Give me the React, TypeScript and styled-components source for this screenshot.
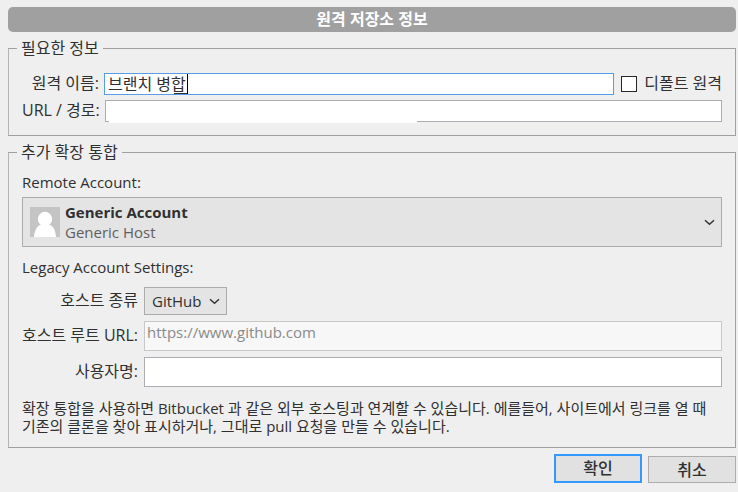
import React from "react";
import styled, { createGlobalStyle, css } from "styled-components";

const GlobalStyle = createGlobalStyle`
  *, *::before, *::after { box-sizing: border-box; }
  body {
    margin: 0;
    background: #efefef;
    color: #303030;
    font-family: "Open Sans", "Noto Sans CJK KR", sans-serif;
    font-size: 15px;
    line-height: 20px;
  }
  button, input, select { font: inherit; color: inherit; margin: 0; border-radius: 0; outline: none; }
`;

const hangul = css`
  font-family: "Open Sans", "Noto Sans CJK KR", sans-serif;
  font-size: 16px;
`;

const Dialog = styled.form`
  display: flex;
  flex-direction: column;
  padding: 7px 2px 8px 8px;
`;

const Title = styled.h1`
  ${hangul}
  margin: 0 0 6px;
  border-radius: 5px;
  background: #a0a0a0;
  color: #fff;
  font-weight: 700;
  line-height: 25px;
  text-align: center;
`;

const Group = styled.fieldset<{ $pad: string }>`
  min-width: 0;
  margin: 0 0 6px;
  padding: ${(p) => p.$pad};
  border: 1px solid #a0a0a0;
  border-left-color: #b4b4b4;
`;

const Legend = styled.legend`
  ${hangul}
  margin-left: -5px;
  padding: 0 4px;
  line-height: 20px;
`;

const Rows = styled.div<{ $gap: number }>`
  display: flex;
  flex-direction: column;
  gap: ${(p) => p.$gap}px;
`;

const Row = styled.div<{ $gap: number }>`
  display: flex;
  align-items: center;
  gap: ${(p) => p.$gap}px;
`;

const RowLabel = styled.label<{ $width: number }>`
  ${hangul}
  flex: 0 0 ${(p) => p.$width}px;
  padding-bottom: 2px;
  line-height: 18px;
  text-align: right;
  white-space: nowrap;
`;

const Field = styled.div`
  position: relative;
  flex: 1;
  min-width: 0;
  display: flex;
`;

const TextInput = styled.input<{ $height: number }>`
  flex: 1;
  width: 100%;
  min-width: 0;
  height: ${(p) => p.$height}px;
  padding: 0 3px;
  border: 1px solid #abadb3;
  background: #fff;

  &:disabled {
    padding: 0 2px 8px;
    border-color: #c8c8c8;
    background: #f7f7f7;
    color: #8a8a8a;
  }
`;

const NameInput = styled(TextInput)`
  ${hangul}
  padding-bottom: 2px;
  border-color: #569de5;
`;

const Composition = styled.span`
  position: absolute;
  top: 1px;
  bottom: 1px;
  left: 70px;
  width: 14px;
  border-right: 1px solid #000;
  pointer-events: none;

  &::before {
    content: "";
    position: absolute;
    left: 0;
    right: 0;
    bottom: 0;
    height: 1px;
    background: #303030;
  }
`;

const Mask = styled.span`
  position: absolute;
  top: 1px;
  bottom: -1px;
  left: 4px;
  width: 50%;
  background: #fff;
`;

const CheckLabel = styled.label`
  ${hangul}
  display: flex;
  align-items: center;
  gap: 7px;
  margin-left: 2px;
  white-space: nowrap;
`;

const CheckText = styled.span`
  padding-bottom: 2px;
  line-height: 18px;
`;

const Checkbox = styled.input`
  appearance: none;
  width: 16px;
  height: 16px;
  border: 1px solid #262626;
  background: #fff;

  &:checked { background: #262626; }
`;

const SectionLabel = styled.div`
  padding-bottom: 2px;
  line-height: 18px;
`;

const AccountButton = styled.button`
  display: flex;
  align-items: center;
  width: 100%;
  height: 50px;
  margin: 4px 0 11px;
  padding: 0 6px 0 7px;
  border: 1px solid #acacac;
  background: #e4e4e4;
  text-align: left;
`;

const AccountText = styled.span`
  flex: 1;
  display: flex;
  flex-direction: column;
  margin-left: 5px;
`;

const AccountName = styled.strong`
  font-weight: 700;
`;

const AccountHost = styled.span`
  color: #606060;
`;

const SelectWrap = styled.div`
  display: flex;
  align-items: center;
  position: relative;
`;

const Select = styled.select`
  appearance: none;
  height: 28px;
  padding: 0 24px 0 7px;
  border: 1px solid #acacac;
  background: #e4e4e4;
`;

const SelectArrow = styled.span`
  position: absolute;
  right: 7px;
  display: flex;
  pointer-events: none;
`;

const Note = styled.p`
  margin: 12px 0 0;
  font-size: 15px;
  line-height: 18px;
`;

const Actions = styled.div`
  display: flex;
  justify-content: flex-end;
  align-items: flex-end;
  gap: 6px;
`;

const ActionButton = styled.button<{ $primary?: boolean }>`
  ${hangul}
  width: 88px;
  height: ${(p) => (p.$primary ? 29 : 27)}px;
  padding: ${(p) => (p.$primary ? "0 0 2px" : "0")};
  border: ${(p) => (p.$primary ? "2px solid #3399ff" : "1px solid #adadad")};
  background: #e1e1e1;
  font-weight: 500;
  line-height: 20px;
`;

const Chevron = () => (
  <svg width="11" height="7" viewBox="0 0 11 7" fill="none" aria-hidden="true">
    <path d="M1 1.2 5.5 5.2 10 1.2" stroke="#333" strokeWidth="1.5" />
  </svg>
);

const Avatar = () => (
  <svg width="30" height="30" viewBox="0 0 30 30" aria-hidden="true">
    <rect width="30" height="30" fill="#c4c4c4" />
    <circle cx="15" cy="12" r="7.2" fill="#fff" />
    <path d="M4 30C4.4 23 7.5 18.2 11.5 17.3h7C22.500 18.200 25.600 23 26 30Z" fill="#fff" />
  </svg>
);

export default function App() {
  return (
    <>
      <GlobalStyle />
      <Dialog onSubmit={(e) => e.preventDefault()}>
        <Title>원격 저장소 정보</Title>

        <Group $pad="15px 13px 13px">
          <Legend>필요한 정보</Legend>
          <Rows $gap={5}>
            <Row $gap={5}>
              <RowLabel $width={77} htmlFor="name">원격 이름:</RowLabel>
              <Field>
                <NameInput $height={22} id="name" defaultValue="브랜치 병합" />
                <Composition />
              </Field>
              <CheckLabel>
                <Checkbox type="checkbox" />
                <CheckText>디폴트 원격</CheckText>
              </CheckLabel>
            </Row>
            <Row $gap={5}>
              <RowLabel $width={77} htmlFor="path">URL / 경로:</RowLabel>
              <Field>
                <TextInput $height={22} id="path" />
                <Mask />
              </Field>
            </Row>
          </Rows>
        </Group>

        <Group $pad="11px 13px 12px">
          <Legend>추가 확장 통합</Legend>
          <SectionLabel id="account-label">Remote Account:</SectionLabel>
          <AccountButton type="button" aria-haspopup="listbox" aria-describedby="account-label">
            <Avatar />
            <AccountText>
              <AccountName>Generic Account</AccountName>
              <AccountHost>Generic Host</AccountHost>
            </AccountText>
            <Chevron />
          </AccountButton>
          <Rows $gap={9}>
            <SectionLabel>Legacy Account Settings:</SectionLabel>
            <Rows $gap={6}>
              <Row $gap={6}>
                <RowLabel $width={116} htmlFor="host">호스트 종류</RowLabel>
                <SelectWrap>
                  <Select id="host" defaultValue="GitHub">
                    <option>GitHub</option>
                  </Select>
                  <SelectArrow><Chevron /></SelectArrow>
                </SelectWrap>
              </Row>
              <Row $gap={6}>
                <RowLabel $width={116} htmlFor="root">호스트 루트 URL:</RowLabel>
                <TextInput $height={30} id="root" defaultValue="https://www.github.com" disabled />
              </Row>
              <Row $gap={6}>
                <RowLabel $width={116} htmlFor="user">사용자명:</RowLabel>
                <TextInput $height={30} id="user" />
              </Row>
            </Rows>
          </Rows>
          <Note>
            확장 통합을 사용하면 Bitbucket 과 같은 외부 호스팅과 연계할 수 있습니다. 에를들어, 사이트에서 링크를 열 때
            <br />
            기존의 클론을 찾아 표시하거나, 그대로 pull 요청을 만들 수 있습니다.
          </Note>
        </Group>

        <Actions>
          <ActionButton type="submit" $primary>확인</ActionButton>
          <ActionButton type="button">취소</ActionButton>
        </Actions>
      </Dialog>
    </>
  );
}
